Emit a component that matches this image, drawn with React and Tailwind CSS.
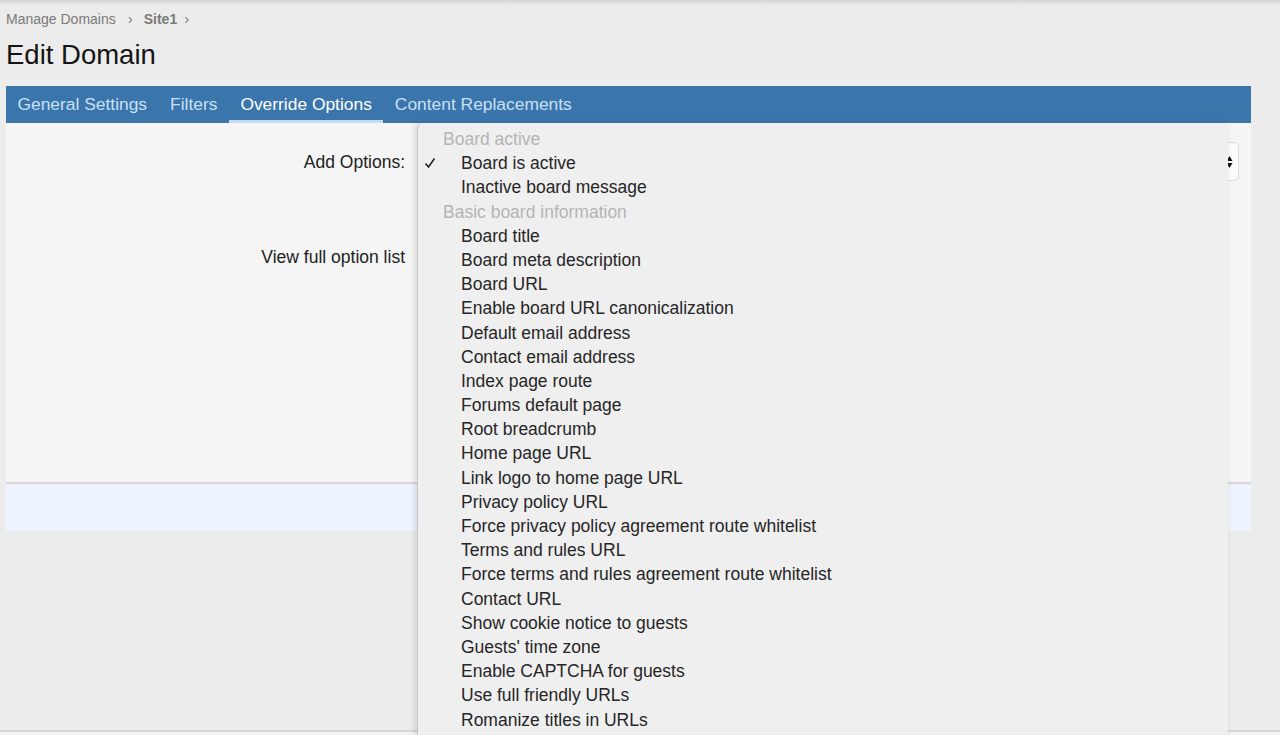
import React from "react";

const items = [
  { t: "Board active", h: true },
  { t: "Board is active", c: true },
  { t: "Inactive board message" },
  { t: "Basic board information", h: true },
  { t: "Board title" },
  { t: "Board meta description" },
  { t: "Board URL" },
  { t: "Enable board URL canonicalization" },
  { t: "Default email address" },
  { t: "Contact email address" },
  { t: "Index page route" },
  { t: "Forums default page" },
  { t: "Root breadcrumb" },
  { t: "Home page URL" },
  { t: "Link logo to home page URL" },
  { t: "Privacy policy URL" },
  { t: "Force privacy policy agreement route whitelist" },
  { t: "Terms and rules URL" },
  { t: "Force terms and rules agreement route whitelist" },
  { t: "Contact URL" },
  { t: "Show cookie notice to guests" },
  { t: "Guests' time zone" },
  { t: "Enable CAPTCHA for guests" },
  { t: "Use full friendly URLs" },
  { t: "Romanize titles in URLs" },
];

const tabs = [
  { t: "General Settings" },
  { t: "Filters" },
  { t: "Override Options", a: true },
  { t: "Content Replacements" },
];

export default function App() {
  return (
    <div
      className="relative w-[1280px] h-[735px] overflow-hidden bg-[#ececec] flex flex-col"
      style={{ fontFamily: '"Liberation Sans", Arial, sans-serif' }}
    >
      <div className="h-[6px] bg-gradient-to-b from-[#d6d6d6] to-[#ececec]" />
      <div className="flex items-center px-[6px] h-[26px] text-[14px] text-[#7a7a7a]">
        <span>Manage Domains</span>
        <span className="ml-[12px] text-[15px]">›</span>
        <span className="font-bold ml-[11px]">Site1</span>
        <span className="ml-[7px] text-[15px]">›</span>
      </div>
      <div className="px-[6px] h-[46px] flex items-center text-[27.5px] text-[#141414]">
        Edit Domain
      </div>
      <div className="mx-[6px] w-[1245px] mt-[8px] h-[37px] bg-[#3a75ac] flex pl-0">
        {tabs.map((tb) => (
          <div
            key={tb.t}
            className={
              tb.a
                ? "px-[11.5px] h-full flex items-center text-[17.4px] text-white border-b-[3px] border-[#c3dcf2] pt-[3px]"
                : "px-[11.5px] h-full flex items-center text-[17.4px] text-[#c9e0f5]"
            }
          >
            {tb.t}
          </div>
        ))}
      </div>
      <div className="mx-[6px] w-[1245px] h-[361px] bg-[#f5f5f5] border-b-2 border-[#d4d6d9] flex">
        <div className="w-[399px] flex flex-col items-end text-[17.5px] text-[#222]">
          <div className="mt-[27px] h-[24px] flex items-center">Add Options:</div>
          <div className="mt-[71px] h-[24px] flex items-center">View full option list</div>
        </div>
        <div className="flex-1 flex justify-end pr-[12px] pt-[19px]">
          <div className="w-[40px] h-[39px] rounded-[5px] border border-[#dcdcdc] bg-[#fbfbfb] flex items-center justify-end pr-[5px]">
            <svg width="7" height="14" viewBox="0 0 7 14">
              <path d="M3.5 1 L6.5 6 L0.5 6 Z" fill="#111" />
              <path d="M3.5 13 L6.5 8 L0.5 8 Z" fill="#111" />
            </svg>
          </div>
        </div>
      </div>
      <div className="mx-[6px] w-[1245px] h-[46px] mt-[1px] bg-[#edf4fd]" />
      <div className="flex-1" />
      <div className="h-[5px] border-t-2 border-[#d6d6d6] bg-[#f4f4f4]" />

      <div className="absolute left-[417px] top-[123px] w-[811px] h-[640px] bg-[#efefef] rounded-[6px] border-l border-[#c8c8c8] shadow-[-2px_0_6px_rgba(0,0,0,0.12)] pt-[4px] text-[17.5px] leading-[24.2px]">
        {items.map((it) => (
          <div key={it.t} className="relative h-[24.2px] flex items-center">
            {it.c && (
              <svg className="absolute left-[6px]" width="12" height="12" viewBox="0 0 12 12">
                <path d="M1.5 6.5 L4.5 10 L10.5 1.5" fill="none" stroke="#222" strokeWidth="1.6" />
              </svg>
            )}
            <span
              className={
                it.h
                  ? "pl-[25px] text-[#b4b4b4]"
                  : "pl-[43px] text-[#262626]"
              }
            >
              {it.t}
            </span>
          </div>
        ))}
      </div>
    </div>
  );
}
